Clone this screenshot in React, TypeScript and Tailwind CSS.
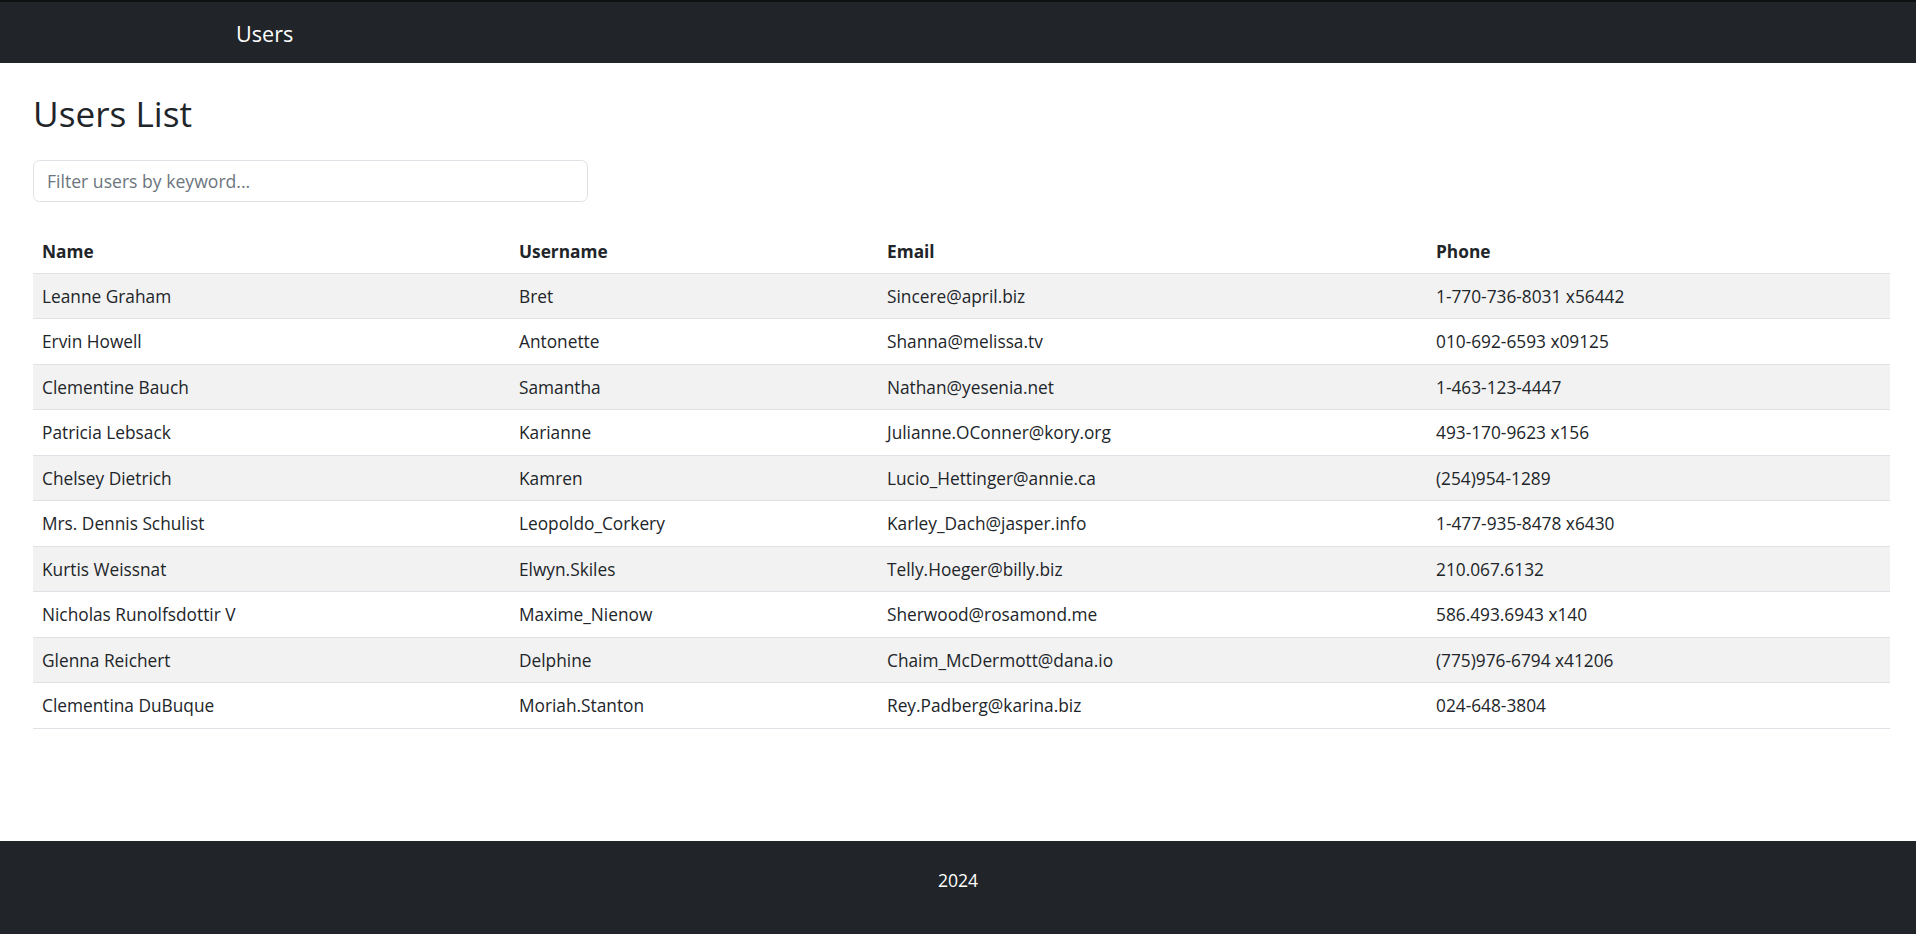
import { useState } from 'react';

type User = {
    id: number;
    name: string;
    username: string;
    email: string;
    phone: string;
};

const users: User[] = [
    { id: 1, name: 'Leanne Graham', username: 'Bret', email: 'Sincere@april.biz', phone: '1-770-736-8031 x56442' },
    { id: 2, name: 'Ervin Howell', username: 'Antonette', email: 'Shanna@melissa.tv', phone: '010-692-6593 x09125' },
    { id: 3, name: 'Clementine Bauch', username: 'Samantha', email: 'Nathan@yesenia.net', phone: '1-463-123-4447' },
    { id: 4, name: 'Patricia Lebsack', username: 'Karianne', email: 'Julianne.OConner@kory.org', phone: '493-170-9623 x156' },
    { id: 5, name: 'Chelsey Dietrich', username: 'Kamren', email: 'Lucio_Hettinger@annie.ca', phone: '(254)954-1289' },
    { id: 6, name: 'Mrs. Dennis Schulist', username: 'Leopoldo_Corkery', email: 'Karley_Dach@jasper.info', phone: '1-477-935-8478 x6430' },
    { id: 7, name: 'Kurtis Weissnat', username: 'Elwyn.Skiles', email: 'Telly.Hoeger@billy.biz', phone: '210.067.6132' },
    { id: 8, name: 'Nicholas Runolfsdottir V', username: 'Maxime_Nienow', email: 'Sherwood@rosamond.me', phone: '586.493.6943 x140' },
    { id: 9, name: 'Glenna Reichert', username: 'Delphine', email: 'Chaim_McDermott@dana.io', phone: '(775)976-6794 x41206' },
    { id: 10, name: 'Clementina DuBuque', username: 'Moriah.Stanton', email: 'Rey.Padberg@karina.biz', phone: '024-648-3804' },
];

export default function App() {
    const [keyword, setKeyword] = useState<string>('');

    const filtered = users.filter((u) => {
        const q = keyword.toLowerCase();
        return [u.name, u.username, u.email, u.phone].some((v) => v.toLowerCase().includes(q));
    });

    return (
        <div className="flex min-h-screen flex-col bg-white font-['Open_Sans',sans-serif] text-[17.6px] text-[#212529]">
            <nav className="flex h-[63px] items-center border-t-2 border-[#0f1012] bg-[#212529] pl-[236px]">
                <a href="#" className="pt-[1px] text-[21.6px] leading-[33px] text-white">
                    Users
                </a>
            </nav>

            <main className="flex-1 pr-[26px] pl-[33px]">
                <h2 className="mt-[29px] text-[35.2px] leading-[42px] font-normal">Users List</h2>
                <input
                    type="text"
                    value={keyword}
                    onChange={(e) => setKeyword(e.target.value)}
                    placeholder="Filter users by keyword..."
                    className="mt-[26px] h-[42px] w-[555px] rounded-[6.6px] border border-[#dee2e6] px-[13px] text-[17.6px] text-[#212529] placeholder-[#6c757d] outline-none focus:border-[#86b7fe]"
                />

                <table className="mt-[26px] w-full table-fixed border-collapse text-[17.3px]">
                    <colgroup>
                        <col className="w-[477px]" />
                        <col className="w-[368px]" />
                        <col className="w-[549px]" />
                        <col />
                    </colgroup>
                    <thead>
                        <tr className="border-b border-[#dee2e6]">
                            <th className="h-[45px] px-[9px] pt-[4px] text-left font-bold">Name</th>
                            <th className="h-[45px] px-[9px] pt-[4px] text-left font-bold">Username</th>
                            <th className="h-[45px] px-[9px] pt-[4px] text-left font-bold">Email</th>
                            <th className="h-[45px] px-[9px] pt-[4px] text-left font-bold">Phone</th>
                        </tr>
                    </thead>
                    <tbody>
                        {filtered.map((u, i) => (
                            <tr key={u.id} className={`border-b border-[#dee2e6] ${i % 2 === 0 ? 'bg-[#f2f2f2]' : 'bg-white'}`}>
                                <td className="h-[45.5px] px-[9px] pt-[2px]">{u.name}</td>
                                <td className="h-[45.5px] px-[9px] pt-[2px]">{u.username}</td>
                                <td className="h-[45.5px] px-[9px] pt-[2px]">{u.email}</td>
                                <td className="h-[45.5px] px-[9px] pt-[2px]">{u.phone}</td>
                            </tr>
                        ))}
                    </tbody>
                </table>
            </main>

            <footer className="h-[93px] bg-[#212529] pt-[26px] text-center leading-[26.4px] text-white">
                <p>2024</p>
            </footer>
        </div>
    );
}
